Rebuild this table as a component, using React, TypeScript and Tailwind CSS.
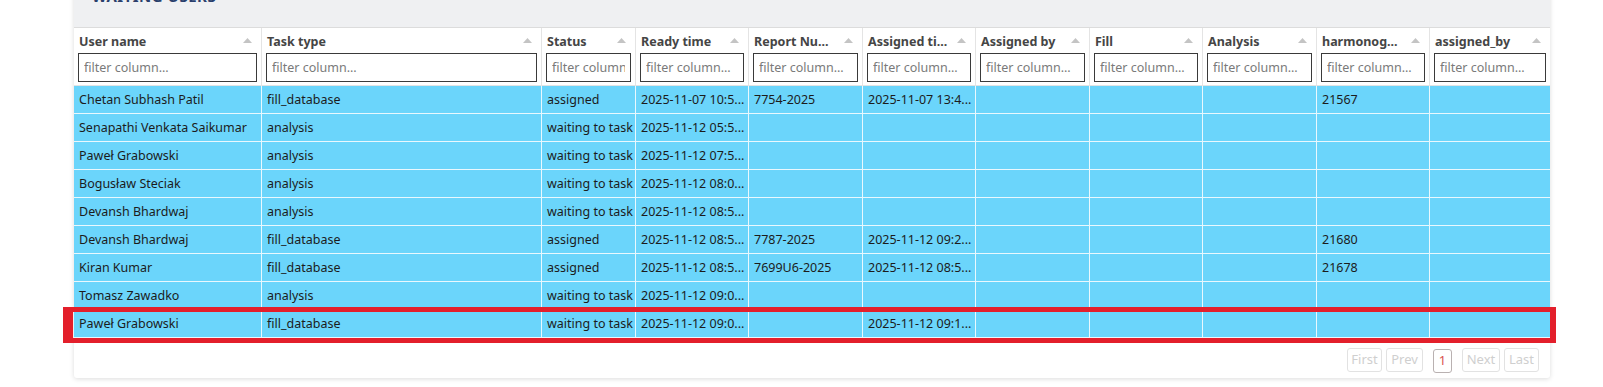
import React from 'react';

type Row = string[];

const columns: string[] = [
  'User name',
  'Task type',
  'Status',
  'Ready time',
  'Report Nu...',
  'Assigned ti...',
  'Assigned by',
  'Fill',
  'Analysis',
  'harmonog...',
  'assigned_by',
];

const rows: Row[] = [
  ['Chetan Subhash Patil', 'fill_database', 'assigned', '2025-11-07 10:5...', '7754-2025', '2025-11-07 13:4...', '', '', '', '21567', ''],
  ['Senapathi Venkata Saikumar', 'analysis', 'waiting to task', '2025-11-12 05:5...', '', '', '', '', '', '', ''],
  ['Paweł Grabowski', 'analysis', 'waiting to task', '2025-11-12 07:5...', '', '', '', '', '', '', ''],
  ['Bogusław Steciak', 'analysis', 'waiting to task', '2025-11-12 08:0...', '', '', '', '', '', '', ''],
  ['Devansh Bhardwaj', 'analysis', 'waiting to task', '2025-11-12 08:5...', '', '', '', '', '', '', ''],
  ['Devansh Bhardwaj', 'fill_database', 'assigned', '2025-11-12 08:5...', '7787-2025', '2025-11-12 09:2...', '', '', '', '21680', ''],
  ['Kiran Kumar', 'fill_database', 'assigned', '2025-11-12 08:5...', '7699U6-2025', '2025-11-12 08:5...', '', '', '', '21678', ''],
  ['Tomasz Zawadko', 'analysis', 'waiting to task', '2025-11-12 09:0...', '', '', '', '', '', '', ''],
  ['Paweł Grabowski', 'fill_database', 'waiting to task', '2025-11-12 09:0...', '', '2025-11-12 09:1...', '', '', '', '', ''],
];

const gridCols =
  'grid grid-cols-[188px_280px_94px_113px_114px_113px_114px_113px_114px_113px_120px]';

const SortArrow = () => (
  <svg width="9" height="5" viewBox="0 0 9 5" className="absolute right-[9px] top-[10px]">
    <path d="M0 5 L4.5 0 L9 5 Z" fill="#c4c4c4" />
  </svg>
);

const PageButton: React.FC<{ label: string; w: string; active?: boolean }> = ({ label, w, active }) => (
  <button
    className={`${w} h-[24px] rounded-[3px] border text-[13px] leading-none ${
      active ? 'border-[#b9b1b1] text-[#d9534f]' : 'border-[#e2e2e2] text-[#cfcfcf]'
    }`}
  >
    {label}
  </button>
);

export default function App() {
  return (
    <div className="w-[1603px] h-[387px] overflow-hidden bg-white font-['Noto_Sans','Open_Sans',sans-serif]">
      <div className="ml-[74px] -mt-[20px] w-[1476px] rounded-[3px] bg-white shadow-[0_1px_5px_rgba(0,0,0,0.14)]">
        {/* Panel title */}
        <div className="h-[47px] bg-[#eff0f2] pl-[18px] pt-[4px]">
          <span className="text-[15px] font-bold leading-[20px] tracking-[0.5px] text-[#2a3f6c]">WAITING USERS</span>
        </div>

        {/* Header */}
        <div className={`${gridCols} border-t border-[#dcdcdc] border-b border-b-[#e3e3e3] bg-white`}>
          {columns.map((c, i) => (
            <div
              key={c}
              className={`relative px-[4px] pt-[5px] pb-[3px] ${i < columns.length - 1 ? 'border-r border-[#e4e4e4]' : ''}`}
            >
              <div className="h-[18px] pl-[1px] pr-[30px] text-[12.5px] font-bold leading-[18px] text-[#454545] whitespace-nowrap overflow-hidden">
                {c}
              </div>
              <SortArrow />
              <input
                placeholder="filter column..."
                className="mt-[2px] block h-[29px] w-full border border-[#3a3a3a] bg-white px-[5px] text-[12.5px] text-[#333] placeholder:text-[#7a7a7a] outline-none"
              />
            </div>
          ))}
        </div>

        {/* Body */}
        <div>
          {rows.map((r, ri) => (
            <div key={ri} className={`${gridCols} relative h-[28px] bg-[#6bd5fb] border-b border-[#e9f8fe]`}>
              {r.map((v, ci) => (
                <div
                  key={ci}
                  className={`px-[5px] pt-[1px] text-[12.5px] leading-[26px] text-[#1c1c1c] whitespace-nowrap overflow-hidden ${
                    ci < r.length - 1 ? 'border-r border-[#e9f8fe]' : ''
                  }`}
                >
                  {v}
                </div>
              ))}
              {ri === rows.length - 1 && (
                <div className="absolute -left-[11px] -right-[6px] -top-[3px] -bottom-[6px] border-t-[5px] border-b-[5px] border-l-[10px] border-r-[6px] border-[#e31f2b]" />
              )}
            </div>
          ))}
        </div>

        {/* Pagination */}
        <div className="flex justify-end items-center pr-[11px] pt-[9px] pb-[5px]">
          <div className="flex gap-[4px]">
            <PageButton label="First" w="w-[35px]" />
            <PageButton label="Prev" w="w-[37px]" />
          </div>
          <div className="mx-[10px]">
            <PageButton label="1" w="w-[19px]" active />
          </div>
          <div className="flex gap-[4px]">
            <PageButton label="Next" w="w-[38px]" />
            <PageButton label="Last" w="w-[35px]" />
          </div>
        </div>
      </div>
    </div>
  );
}
